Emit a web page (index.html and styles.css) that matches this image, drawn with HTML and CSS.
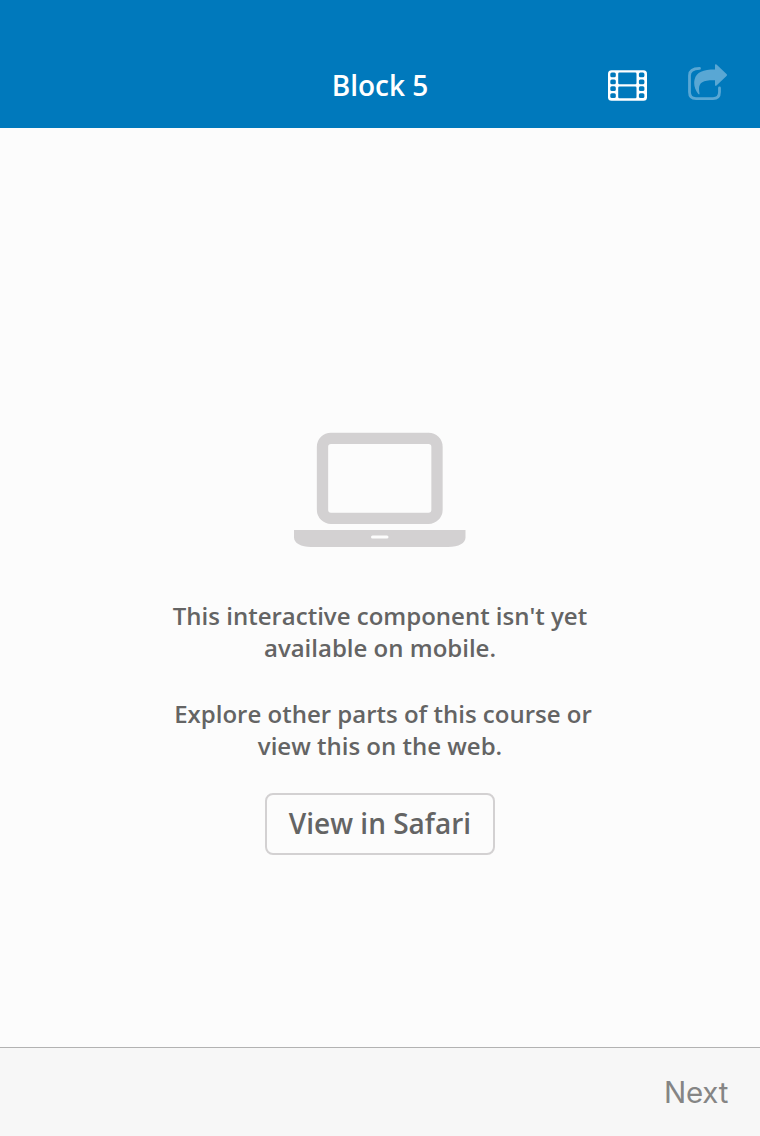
FILE: index.html
```html
<!DOCTYPE html>
<html lang="en">
<head>
<meta charset="utf-8">
<title>Block 5</title>
<link rel="stylesheet" href="styles.css">
</head>
<body>
<header class="navbar">
  <h1 class="title">Block 5</h1>
  <div class="actions">
    <svg class="film" viewBox="0 0 39 31" width="39" height="31"><rect y=".3" width="39" height="30.400" rx="3.5" fill="#fff"/><g fill="#0079bc"><rect x="2.300" y="2.500" width="5.500" height="4.800" rx="1.500"/><rect x="2.300" y="9.500" width="5.500" height="4.800" rx="1.500"/><rect x="2.300" y="16.300" width="5.500" height="4.800" rx="1.500"/><rect x="2.300" y="23.200" width="5.500" height="4.800" rx="1.500"/><rect x="10.200" y="2.500" width="18.300" height="11.700" rx="1.200"/><rect x="10.200" y="16.500" width="18.300" height="11.700" rx="1.200"/><rect x="30.900" y="2.500" width="5.500" height="4.800" rx="1.500"/><rect x="30.900" y="9.500" width="5.500" height="4.800" rx="1.500"/><rect x="30.900" y="16.300" width="5.500" height="4.800" rx="1.500"/><rect x="30.900" y="23.200" width="5.500" height="4.800" rx="1.500"/></g></svg>
    <svg class="share" viewBox="0 0 40 37" width="40" height="37"><path fill="none" stroke="#59a7d4" stroke-width="2.8" stroke-linecap="round" d="M11.500 4.400C5 4.400 1.500 7 1.500 11.500V28Q1.500 34.600 8 34.600H25Q31.500 34.600 31.500 28V24"/><path fill="#59a7d4" d="M27 1.200Q27 -.5 28.500 .5L38.500 10Q39.500 11 38.500 12L28.500 21.600Q27 22.500 27 20.800V16.300C13.500 16 9.500 19 11.500 29.500Q11.500 31 10.300 30C6.500 25 5.500 20 6.600 15.500C8.500 8 15 5.600 27 5.600Z"/></svg>
  </div>
</header>
<main class="content">
  <svg class="laptop" viewBox="0 0 172 115" width="172" height="115"><rect x="28.500" y="6.300" width="114.500" height="80" rx="8.500" fill="none" stroke="#d3d1d2" stroke-width="11.300"/><path fill="#d3d1d2" fill-rule="evenodd" d="M0 98H171.500V105.500C171.500 111 165 115 154 115H17C7 115 0 111 0 105.500ZM78.500 103.500a1.500 1.500 0 0 0 0 3H93a1.500 1.500 0 0 0 0-3Z"/></svg>
  <p class="message">This interactive component isn't yet<br>available on mobile.</p>
  <p class="message explore"><span class="line">Explore other parts of this course or</span><br>view this on the web.</p>
  <button class="open">View in Safari</button>
</main>
<footer class="toolbar"><span class="next">Next</span></footer>
</body>
</html>
```
FILE: styles.css
```css
* { box-sizing: border-box; }
body { margin: 0; height: 1136px; display: flex; flex-direction: column; background: #fcfcfc; font-family: "Open Sans", sans-serif; }
.navbar { height: 128px; padding-top: 40px; background: #0079bc; display: grid; grid-template-columns: 1fr auto 1fr; align-items: center; color: #fff; }
.title { grid-column: 2; margin: 0; font-size: 28px; font-weight: 600; line-height: 38px; padding-top: 2px; }
.actions { display: flex; justify-content: flex-end; align-items: flex-start; gap: 41px; padding: 0 32px 4px 0; }
.film { margin-top: 6px; }
.content { flex: 1; display: flex; flex-direction: column; align-items: center; padding-top: 304px; color: #646464; }
.laptop { display: block; }
.message { margin: 53px 0 0; font-size: 24px; font-weight: 600; line-height: 32px; text-align: center; }
.explore { margin-top: 34px; }
.line { padding-left: 6px; }
.open { margin-top: 31px; width: 230px; height: 62px; padding: 0 0 2px; border: 2px solid #d3d1d2; border-radius: 8px; background: #fcfcfc; color: #646464; font: 600 28px "Open Sans", sans-serif; }
.toolbar { height: 89px; border-top: 1px solid #b2b2b2; background: #f7f7f7; display: flex; align-items: center; justify-content: flex-end; padding: 0 32px 0 0; }
.next { font: 400 29.5px Inter, sans-serif; letter-spacing: -.3px; color: #858585; }
```
